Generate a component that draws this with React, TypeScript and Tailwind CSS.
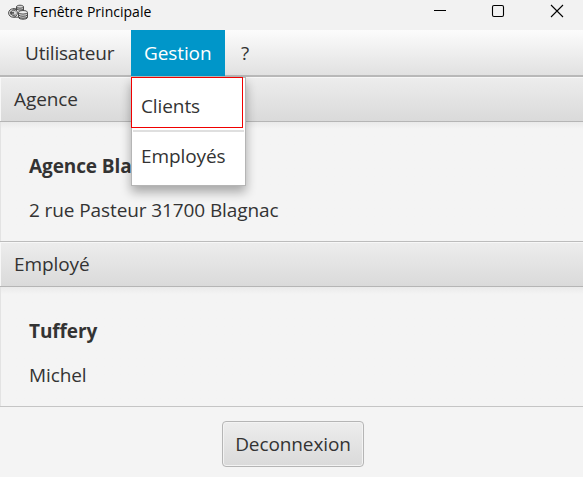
import type { ReactNode } from 'react';

function CoinsIcon() {
  return (
    <svg className="ml-2 h-[16px] w-[20px] shrink-0" viewBox="0 0 20 16" fill="none" stroke="#404040" strokeWidth="0.9">
      <path d="M8.5 6V2.8C8.5 .7 15.5.7 15.5 2.8V7" fill="#d8d8d8" />
      <path d="M8.5 3C9 4.6 15 4.6 15.5 3M8.5 5C9.5 6.4 14.5 6.4 15.5 5" />
      <ellipse cx="5" cy="9" rx="4.4" ry="4.2" fill="#d8d8d8" />
      <path d="M7.5 7C4.5 5.2 2.8 7 3 9C3.2 11.5 5.5 12 7.5 10.8M2 8.4h4M2 9.8h4M5 4.8h4.5M5.5 13.2H10" />
      <path d="M10.5 8.5v5C11 15.8 19 15.8 19.5 13.5v-5" fill="#d8d8d8" />
      <ellipse cx="15" cy="8.3" rx="4.5" ry="1.8" fill="#eee" />
      <path d="M10.5 11C12 12.7 18 12.7 19.5 11M10.5 13C12 14.6 18 14.6 19.5 13" />
    </svg>
  );
}

function TitleBar() {
  return (
    <header className="flex h-[30px] shrink-0 items-start bg-[#f2f2f2] text-black">
      <div className="flex h-[24px] items-center">
        <CoinsIcon />
        <span className="ml-[5px] font-['Open_Sans','Noto_Sans',sans-serif] text-[14px] leading-[20px] tracking-[0.02px]">Fenêtre Principale</span>
      </div>
      <svg className="ml-auto mr-[18px] mt-[4px] h-[14px] w-[132px]" viewBox="0 0 132 14" fill="none" stroke="black">
        <path d="M1 6.5h12" />
        <rect x="59.5" y="1.5" width="11" height="11" rx="1.5" strokeWidth="1.1" />
        <path d="M118 1l12 12M130 1l-12 12" strokeWidth="1.1" />
      </svg>
    </header>
  );
}

function MenuPopup() {
  return (
    <div className="absolute left-0 top-[47px] z-10 flex h-[109px] w-[115px] flex-col border border-[#b5b5b5] bg-white text-[#333] shadow-[0_6px_10px_rgba(0,0,0,0.32)]">
      <div className="-ml-px -mt-px flex h-[51px] w-[112px] items-center border border-[#f00000] pl-[9px] pt-[7px]">Clients</div>
      <div className="mx-px mt-[2px] h-[2px] shrink-0 bg-[#dfdfdf]" />
      <div className="flex h-[48px] items-center pl-[9px]">Employés</div>
    </div>
  );
}

function MenuBar() {
  return (
    <nav className="flex h-[47px] shrink-0 border-b-2 border-[#b8b8b8] bg-linear-to-b from-[#fcfcfc] to-[#e1e1e1]">
      <div className="flex h-[46px] w-[131px] items-center pl-[25px] tracking-[-0.2px]">Utilisateur</div>
      <div className="relative h-[46px] w-[94px] bg-[#0096c9] text-white">
        <div className="flex h-[46px] items-center pl-[13px]">Gestion</div>
        <MenuPopup />
      </div>
      <div className="flex h-[46px] items-center pl-[16px]">?</div>
    </nav>
  );
}

function Panel({ title, heading, children, headerClass }: { title: string; heading: string; children: ReactNode; headerClass: string }) {
  return (
    <section className="shrink-0">
      <h2 className={`flex items-center border-b border-[#b5b5b5] bg-linear-to-b from-[#ededed] to-[#dadada] pl-[14px] shadow-[inset_1px_1px_0_#f7f7f7] ${headerClass}`}>{title}</h2>
      <div className="h-[119px] border-l border-[#e3e3e3] bg-linear-to-b from-[#eaeaea] to-[#f4f4f4] to-[7px] pl-[28px] pt-[30px]">
        <div className="h-[44px] font-bold leading-[28px]">{heading}</div>
        <div className="leading-[28px]">{children}</div>
      </div>
    </section>
  );
}

export default function App() {
  return (
    <main className="flex h-[477px] w-[583px] flex-col overflow-hidden bg-[#f4f4f4] font-['Open_Sans','Noto_Sans',sans-serif] text-[19px] tracking-[-0.1px] text-[#333]">
      <TitleBar />
      <MenuBar />
      <Panel title="Agence" heading="Agence Blagnac" headerClass="h-[45px]">2 rue Pasteur 31700 Blagnac</Panel>
      <Panel title="Employé" heading="Tuffery" headerClass="h-[46px] border-t border-t-[#bcbcbc]">Michel</Panel>
      <footer className="flex flex-1 justify-center border-t border-[#c5c5c5] pl-[3px] pt-[14px]">
        <button className="flex h-[46px] w-[142px] items-center justify-center rounded-[4px] border border-[#b5b5b5] bg-linear-to-b from-[#ededed] to-[#dadada] shadow-[inset_0_0_0_1px_#f3f3f3]">Deconnexion</button>
      </footer>
    </main>
  );
}
